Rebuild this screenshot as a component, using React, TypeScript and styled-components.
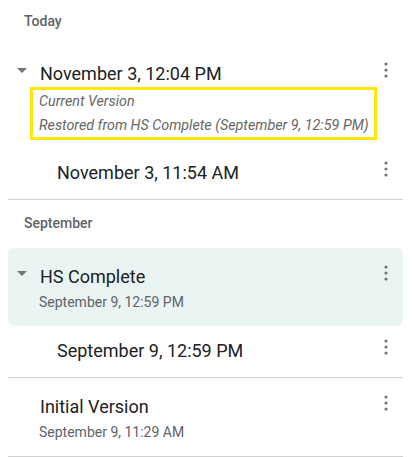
import * as React from "react";
import styled, { createGlobalStyle } from "styled-components";

type Version = {
  title: string;
  sub?: string;
  notes?: string[];
  expandable?: boolean;
  selected?: boolean;
  children?: string[];
};

type Section = {
  label: string;
  versions: Version[];
};

const sections: Section[] = [
  {
    label: "Today",
    versions: [
      {
        title: "November 3, 12:04 PM",
        notes: [
          "Current Version",
          "Restored from HS Complete (September 9, 12:59 PM)",
        ],
        expandable: true,
        children: ["November 3, 11:54 AM"],
      },
    ],
  },
  {
    label: "September",
    versions: [
      {
        title: "HS Complete",
        sub: "September 9, 12:59 PM",
        expandable: true,
        selected: true,
        children: ["September 9, 12:59 PM"],
      },
      {
        title: "Initial Version",
        sub: "September 9, 11:29 AM",
      },
    ],
  },
];

const GlobalStyle = createGlobalStyle`
  body {
    margin: 0;
    background: #ffffff;
    font-family: Roboto, "Liberation Sans", Arial, sans-serif;
    -webkit-font-smoothing: antialiased;
  }
`;

const KebabIcon = () => (
  <svg width="24" height="24" viewBox="0 0 24 24">
    <circle cx="12" cy="6" r="1.6" fill="#757575" />
    <circle cx="12" cy="12" r="1.6" fill="#757575" />
    <circle cx="12" cy="18" r="1.6" fill="#757575" />
  </svg>
);

const App: React.FC = () => {
  return (
    <Panel>
      <GlobalStyle />
      {sections.map((section, si) => (
        <div key={section.label}>
          <SectionHeader $first={si === 0}>{section.label}</SectionHeader>
          {section.versions.map((v) => (
            <Group key={v.title}>
              <Row $selected={!!v.selected} $tight={!!v.notes}>
                <ArrowBox>{v.expandable && <Caret />}</ArrowBox>
                <Main>
                  <Title>{v.title}</Title>
                  {v.sub && <Sub>{v.sub}</Sub>}
                  {v.notes && (
                    <NoteBox>
                      {v.notes.map((n) => (
                        <Note key={n}>{n}</Note>
                      ))}
                    </NoteBox>
                  )}
                </Main>
                <MenuButton>
                  <KebabIcon />
                </MenuButton>
              </Row>
              {v.children &&
                v.children.map((c) => (
                  <ChildRow key={c}>
                    <Main>
                      <Title>{c}</Title>
                    </Main>
                    <MenuButton>
                      <KebabIcon />
                    </MenuButton>
                  </ChildRow>
                ))}
            </Group>
          ))}
        </div>
      ))}
    </Panel>
  );
};

const Panel = styled.div`
  width: 395px;
  padding-left: 8px;
  box-sizing: content-box;
`;

const SectionHeader = styled.div<{ $first: boolean }>`
  height: ${(p) => (p.$first ? "45px" : "48px")};
  box-sizing: border-box;
  padding: ${(p) => (p.$first ? "12px" : "14px")} 0 0 16px;
  font-size: 14px;
  line-height: 18px;
  font-weight: 500;
  color: #5f6368;
`;

const Group = styled.div`
  border-bottom: 1px solid #d0d0d0;
`;

const Row = styled.div<{ $selected: boolean; $tight: boolean }>`
  display: flex;
  align-items: flex-start;
  padding: 13px 5px ${(p) => (p.$tight ? "8px" : "14px")} 2px;
  border-radius: 6px;
  background: ${(p) => (p.$selected ? "#eaf4f2" : "transparent")};
`;

const ChildRow = styled.div`
  display: flex;
  align-items: flex-start;
  padding: 9px 5px 14px 49px;
`;

const ArrowBox = styled.div`
  width: 24px;
  height: 24px;
  flex-shrink: 0;
  display: flex;
  align-items: center;
  justify-content: center;
  margin-right: 6px;
`;

const Caret = styled.span`
  width: 0;
  height: 0;
  border-left: 5px solid transparent;
  border-right: 5px solid transparent;
  border-top: 5px solid #757575;
  margin-top: 1px;
`;

const Main = styled.div`
  flex: 1;
  min-width: 0;
  padding-top: 4px;
`;

const Title = styled.div`
  font-size: 18px;
  line-height: 24px;
  color: #202124;
`;

const Sub = styled.div`
  margin: 3px 0 0 -1px;
  font-size: 14px;
  line-height: 20px;
  color: #5f6368;
`;

const NoteBox = styled.div`
  margin: 1px 0 0 -10px;
  width: 347px;
  box-sizing: border-box;
  border: 3px solid #ffe70a;
  padding: 0 6px;
`;

const Note = styled.div`
  font-size: 14.3px;
  line-height: 23.5px;
  font-style: italic;
  color: #666666;
  white-space: nowrap;
`;

const MenuButton = styled.div`
  width: 24px;
  height: 24px;
  flex-shrink: 0;
  display: flex;
`;

export default App;
